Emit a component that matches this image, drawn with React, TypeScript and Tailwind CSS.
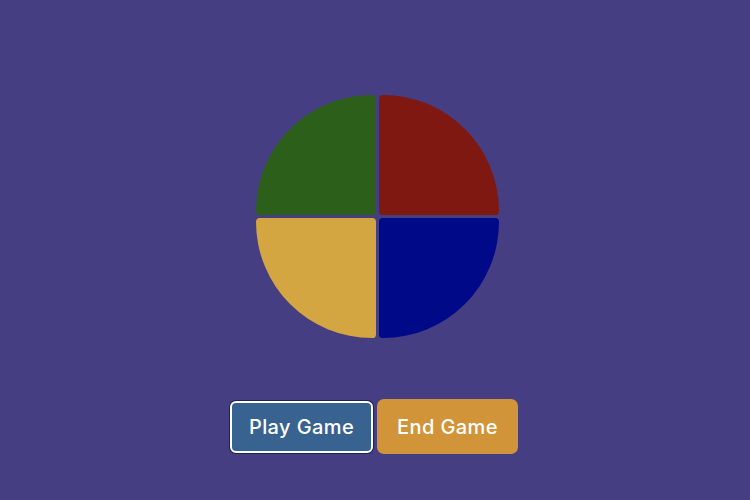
export default function App() {
  return (
    <main
      className="min-h-[500px] w-full bg-[#463e82] flex flex-col items-center pt-[95px]"
      style={{ fontFamily: 'Inter, "Noto Sans", sans-serif' }}
    >
      {/* Simon board */}
      <div className="ml-[4px] grid grid-cols-[120px_120px] grid-rows-[120px_120px] gap-[3px]">
        <button className="bg-[#2b5f1a] rounded-tl-[120px] rounded-tr-[4px] rounded-bl-[4px] rounded-br-[4px]" />
        <button className="bg-[#7e1810] rounded-tr-[120px] rounded-tl-[4px] rounded-bl-[4px] rounded-br-[4px]" />
        <button className="bg-[#d3a641] rounded-bl-[120px] rounded-tl-[4px] rounded-tr-[4px] rounded-br-[4px]" />
        <button className="bg-[#000a88] rounded-br-[120px] rounded-tl-[4px] rounded-tr-[4px] rounded-bl-[4px]" />
      </div>

      {/* Controls */}
      <div className="mt-[61px] mr-[2px] flex items-center gap-[4px]">
        <button className="w-[143px] h-[52px] rounded-[6px] bg-[#386290] border-2 border-white ring-1 ring-[#1c2450] text-white text-[20px] font-medium tracking-[0.4px]">
          Play Game
        </button>
        <button className="w-[141px] h-[55px] rounded-[7px] bg-[#d19438] text-white text-[20px] font-medium tracking-[0.4px]">
          End Game
        </button>
      </div>
    </main>
  )
}
